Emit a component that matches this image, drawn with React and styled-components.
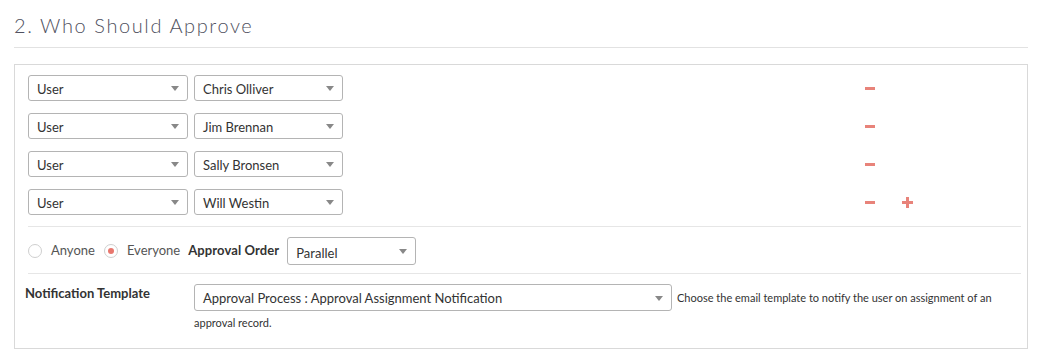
import React from 'react'
import styled, { createGlobalStyle } from 'styled-components'

const GlobalStyle = createGlobalStyle`
	body {
		margin: 0;
		background: #fff;
		font-family: Lato, "Open Sans", Arial, sans-serif;
		color: #333;
	}
`

const Page = styled.div`
	width: 1014px;
	padding: 11px 0 0 14px;
`

const Heading = styled.h2`
	margin: 0;
	padding-bottom: 8px;
	border-bottom: 1px solid #e2e2e2;
	font-weight: 300;
	font-size: 20px;
	line-height: 28px;
	letter-spacing: 1.6px;
	color: #4f5160;
`

const Panel = styled.div`
	margin-top: 16px;
	border: 1px solid #d9d9d9;
	padding: 10px 6px 0 13px;
	height: 285px;
	box-sizing: border-box;
`

const Rows = styled.div`
	display: flex;
	flex-direction: column;
	row-gap: 12px;
	padding-bottom: 11px;
	border-bottom: 1px solid #e6e6e6;
`

const Row = styled.div`
	display: flex;
	align-items: center;
	column-gap: 6px;
`

const Select = styled.div`
	position: relative;
	flex-shrink: 0;
	box-sizing: border-box;
	width: ${(p) => p.$width}px;
	height: ${(p) => p.$height || 26}px;
	border: 1px solid #b4b4b4;
	border-radius: 3px;
	padding: ${(p) => p.$drop || 1}px 20px 0 8px;
	display: ${(p) => (p.$inline ? 'inline-flex' : 'flex')};
	align-items: center;
	font-size: 13px;
	line-height: 16px;
	color: #333;
	background: #fff;
	vertical-align: middle;

	&::after {
		content: '';
		position: absolute;
		right: 8px;
		top: 50%;
		margin-top: -2px;
		border-left: 4px solid transparent;
		border-right: 4px solid transparent;
		border-top: 5px solid #888;
	}
`

const Actions = styled.div`
	display: flex;
	align-items: center;
	column-gap: 27px;
	margin-left: 516px;
`

const Minus = styled.span`
	display: block;
	width: 10px;
	height: 3px;
	background: #e8837a;
`

const Plus = styled.span`
	position: relative;
	display: block;
	width: 11px;
	height: 11px;

	&::before,
	&::after {
		content: '';
		position: absolute;
		background: #e8837a;
	}
	&::before {
		left: 0;
		top: 4px;
		width: 11px;
		height: 3px;
	}
	&::after {
		left: 4px;
		top: 0;
		width: 3px;
		height: 11px;
	}
`

const OrderRow = styled.div`
	display: flex;
	align-items: center;
	padding: 10px 0 8px;
	border-bottom: 1px solid #e6e6e6;
	font-size: 13px;
`

const Radio = styled.span`
	box-sizing: border-box;
	flex-shrink: 0;
	width: 14px;
	height: 14px;
	border-radius: 50%;
	border: 1px solid #cfcfcf;
	display: flex;
	align-items: center;
	justify-content: center;
	margin-right: ${(p) => p.$gap}px;

	&::after {
		content: '';
		display: ${(p) => (p.$checked ? 'block' : 'none')};
		width: 6px;
		height: 6px;
		border-radius: 50%;
		background: #e8776e;
	}
`

const RadioLabel = styled.span`
	color: #555;
	margin-right: ${(p) => p.$gap}px;
	margin-top: -2px;
`

const Bold = styled.span`
	font-weight: 700;
	color: #333;
	letter-spacing: 0.1px;
	margin-right: ${(p) => p.$gap || 0}px;
	margin-top: -2px;
`

const NotifyRow = styled.div`
	display: flex;
	padding-top: 10px;
	margin-left: -3px;
`

const NotifyLabel = styled.div`
	width: 169px;
	flex-shrink: 0;
	font-size: 13px;
	font-weight: 700;
	line-height: 18px;
`

const NotifyBody = styled.div`
	flex: 1;
	min-width: 0;
	font-size: 11px;
	line-height: 24px;
	color: #333;
`

const Hint = styled.span`
	margin-left: 5px;
	vertical-align: middle;
`

const HintLine = styled.div`
	line-height: 24px;
`

const approvers = ['Chris Olliver', 'Jim Brennan', 'Sally Bronsen', 'Will Westin']

const App = () => {
	return (
		<Page>
			<GlobalStyle />
			<Heading>2. Who Should Approve</Heading>
			<Panel>
				<Rows>
					{approvers.map((name, i) => (
						<Row key={name}>
							<Select $width={160}>User</Select>
							<Select $width={149}>{name}</Select>
							<Actions>
								<Minus />
								{i === approvers.length - 1 && <Plus />}
							</Actions>
						</Row>
					))}
				</Rows>
				<OrderRow>
					<Radio $gap={9} />
					<RadioLabel $gap={9}>Anyone</RadioLabel>
					<Radio $gap={9} $checked />
					<RadioLabel $gap={8}>Everyone</RadioLabel>
					<Bold $gap={8}>Approval Order</Bold>
					<Select $width={129} $height={28} $drop={4}>Parallel</Select>
				</OrderRow>
				<NotifyRow>
					<NotifyLabel>Notification Template</NotifyLabel>
					<NotifyBody>
						<Select $width={478} $height={27} $inline>Approval Process : Approval Assignment Notification</Select>
						<Hint>Choose the email template to notify the user on assignment of an</Hint>
						<HintLine>approval record.</HintLine>
					</NotifyBody>
				</NotifyRow>
			</Panel>
		</Page>
	)
}

export default App
